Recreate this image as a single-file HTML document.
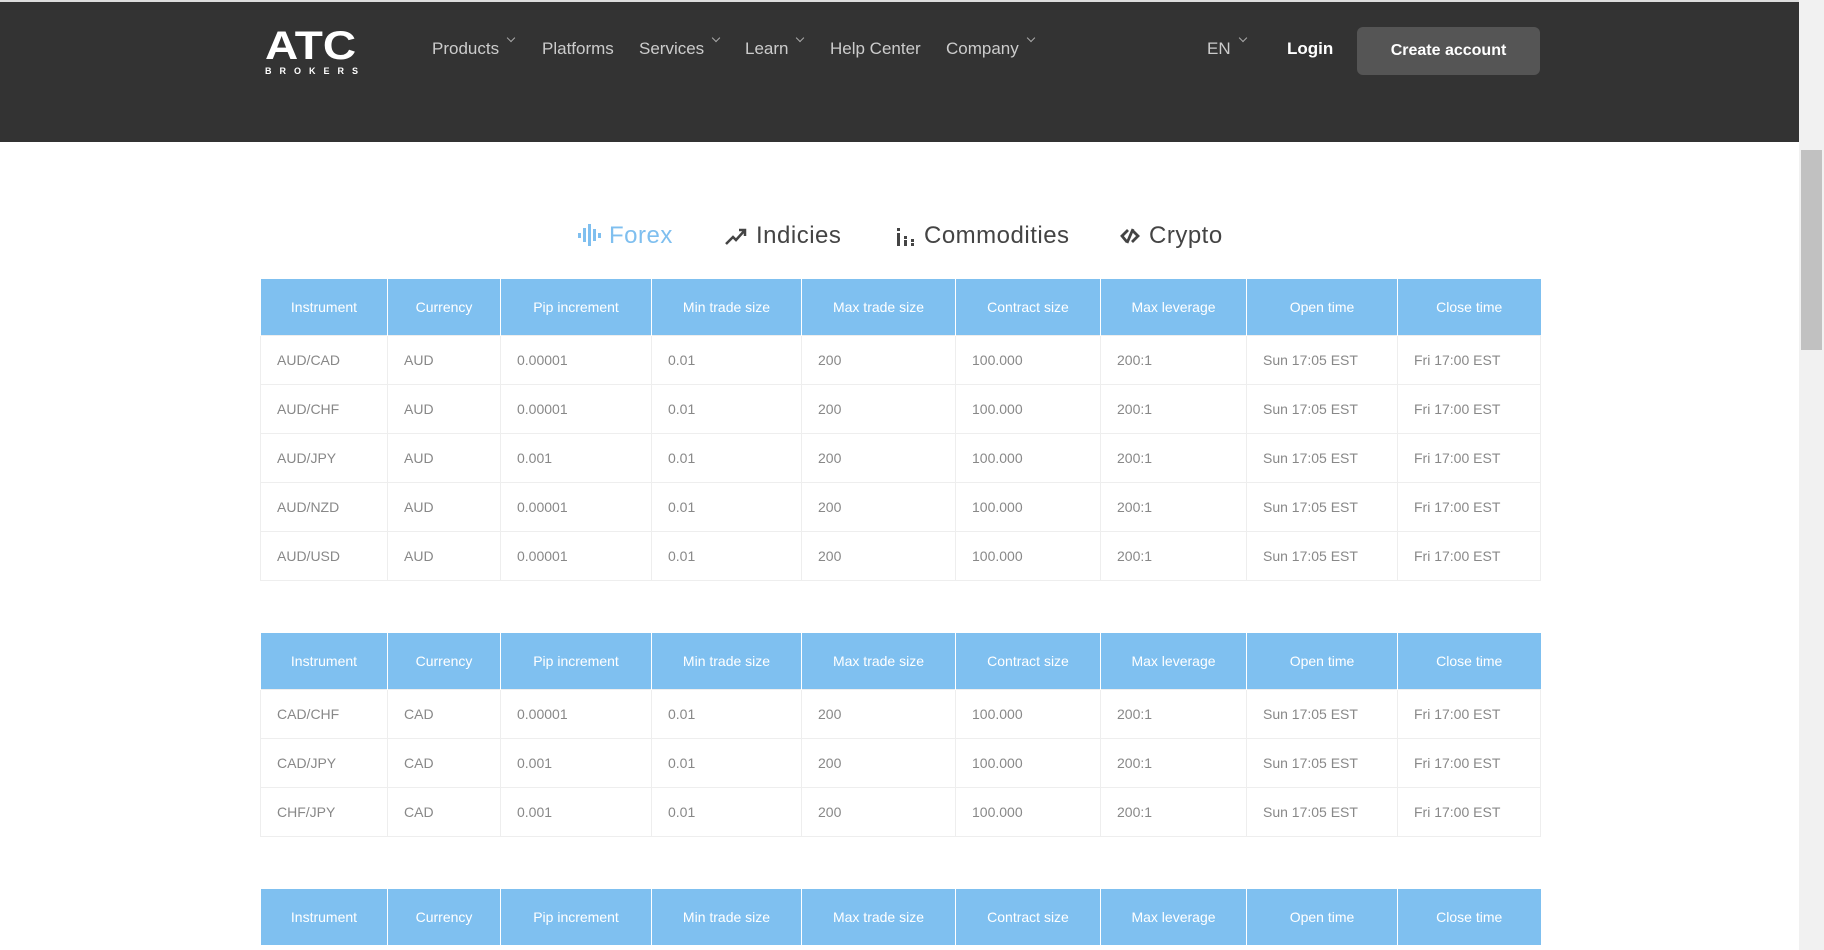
<!DOCTYPE html>
<html><head><meta charset="utf-8"><style>
*{margin:0;padding:0;box-sizing:border-box}
body{width:1824px;height:950px;overflow:hidden;background:#fff;font-family:"Liberation Sans",sans-serif;position:relative}
.hdr{position:absolute;left:0;top:0;width:1799px;height:142px;background:#333;border-top:2px solid #ddd}
.nav{position:absolute;top:37px;font-size:17px;color:#ccc}
.nav span{position:absolute;white-space:nowrap}
.car{display:inline-block;width:6px;height:6px;border-right:1px solid #aaa;border-bottom:1px solid #aaa;transform:rotate(45deg);margin-left:9px;position:relative;top:-4px}
.btn{position:absolute;left:1357px;top:25px;width:183px;height:48px;background:#555;border-radius:6px;color:#fff;font-weight:bold;font-size:16px;text-align:center;line-height:48px}
.sb{position:absolute;right:0;top:0;width:25px;height:950px;background:#f1f1f1}
.thumb{position:absolute;right:2px;top:150px;width:21px;height:200px;background:#c1c1c1}
.tabs{position:absolute;top:222px;font-size:24px;color:#444;letter-spacing:0.5px}
.tabs span{position:absolute;white-space:nowrap}
.tabs svg{vertical-align:-3px;margin-right:8px}
table{position:absolute;left:260px;border-collapse:collapse;table-layout:fixed;width:1280px}
th{background:#7fc0f0;color:#fff;font-weight:normal;font-size:14px;height:56px;border-left:1px solid #fff;text-align:center}
td{height:49px;font-size:14px;color:#888;padding-left:16px;border:1px solid #eee}
</style></head><body>
<div class="hdr">
 <div style="position:absolute;left:265px;top:26px;color:#fff;width:102px">
  <div style="font-size:40px;font-weight:bold;line-height:36px;transform:scaleX(1.15);transform-origin:left">ATC</div>
  <div style="font-size:9px;letter-spacing:8px;margin-top:2px;font-weight:bold">BROKERS</div>
 </div>
 <div class="nav">
  <span style="left:432px">Products<span class="car"></span></span>
  <span style="left:542px">Platforms</span>
  <span style="left:639px">Services<span class="car"></span></span>
  <span style="left:745px">Learn<span class="car"></span></span>
  <span style="left:830px">Help Center</span>
  <span style="left:946px">Company<span class="car"></span></span>
  <span style="left:1207px">EN<span class="car"></span></span>
  <span style="left:1287px;color:#fff;font-weight:bold">Login</span>
 </div>
 <div class="btn">Create account</div>
</div>
<div class="tabs">
 <span style="left:577px;color:#7fbfef"><svg width="24" height="22" viewBox="0 0 24 22"><g fill="#7fbfef"><rect x="1" y="9" width="3" height="5"/><rect x="6" y="4" width="3" height="14"/><rect x="11" y="0" width="3" height="22"/><rect x="16" y="5" width="3" height="12"/><rect x="21" y="9" width="3" height="5"/></g></svg>Forex</span>
 <span style="left:724px"><svg width="24" height="20" viewBox="0 0 24 20"><path d="M2 18 L9 11 L12 14 L21 4 M15 4 H21 V10" stroke="#444" stroke-width="2.5" fill="none"/></svg>Indicies</span>
 <span style="left:896px"><svg width="20" height="20" viewBox="0 0 20 20"><g fill="#444"><rect x="1" y="2" width="3" height="3"/><rect x="1" y="7" width="3" height="13"/><rect x="8" y="10" width="3" height="3"/><rect x="8" y="14" width="3" height="6"/><rect x="15" y="13" width="3" height="3"/><rect x="15" y="17" width="3" height="3"/></g></svg>Commodities</span>
 <span style="left:1119px"><svg width="22" height="20" viewBox="0 0 22 20"><path d="M9 4 L3 10 L8 16 M13 4 L19 10 L13 16 M14 3 L8 17" stroke="#444" stroke-width="2.8" fill="none"/></svg>Crypto</span>
</div>
<table style="top:279px"><colgroup><col style="width:127px"><col style="width:113px"><col style="width:151px"><col style="width:150px"><col style="width:154px"><col style="width:145px"><col style="width:146px"><col style="width:151px"><col style="width:143px"></colgroup>
<tr><th>Instrument</th><th>Currency</th><th>Pip increment</th><th>Min trade size</th><th>Max trade size</th><th>Contract size</th><th>Max leverage</th><th>Open time</th><th>Close time</th></tr>
<tr><td>AUD/CAD</td><td>AUD</td><td>0.00001</td><td>0.01</td><td>200</td><td>100.000</td><td>200:1</td><td>Sun 17:05 EST</td><td>Fri 17:00 EST</td></tr>
<tr><td>AUD/CHF</td><td>AUD</td><td>0.00001</td><td>0.01</td><td>200</td><td>100.000</td><td>200:1</td><td>Sun 17:05 EST</td><td>Fri 17:00 EST</td></tr>
<tr><td>AUD/JPY</td><td>AUD</td><td>0.001</td><td>0.01</td><td>200</td><td>100.000</td><td>200:1</td><td>Sun 17:05 EST</td><td>Fri 17:00 EST</td></tr>
<tr><td>AUD/NZD</td><td>AUD</td><td>0.00001</td><td>0.01</td><td>200</td><td>100.000</td><td>200:1</td><td>Sun 17:05 EST</td><td>Fri 17:00 EST</td></tr>
<tr><td>AUD/USD</td><td>AUD</td><td>0.00001</td><td>0.01</td><td>200</td><td>100.000</td><td>200:1</td><td>Sun 17:05 EST</td><td>Fri 17:00 EST</td></tr>
</table>
<table style="top:633px"><colgroup><col style="width:127px"><col style="width:113px"><col style="width:151px"><col style="width:150px"><col style="width:154px"><col style="width:145px"><col style="width:146px"><col style="width:151px"><col style="width:143px"></colgroup>
<tr><th>Instrument</th><th>Currency</th><th>Pip increment</th><th>Min trade size</th><th>Max trade size</th><th>Contract size</th><th>Max leverage</th><th>Open time</th><th>Close time</th></tr>
<tr><td>CAD/CHF</td><td>CAD</td><td>0.00001</td><td>0.01</td><td>200</td><td>100.000</td><td>200:1</td><td>Sun 17:05 EST</td><td>Fri 17:00 EST</td></tr>
<tr><td>CAD/JPY</td><td>CAD</td><td>0.001</td><td>0.01</td><td>200</td><td>100.000</td><td>200:1</td><td>Sun 17:05 EST</td><td>Fri 17:00 EST</td></tr>
<tr><td>CHF/JPY</td><td>CAD</td><td>0.001</td><td>0.01</td><td>200</td><td>100.000</td><td>200:1</td><td>Sun 17:05 EST</td><td>Fri 17:00 EST</td></tr>
</table>
<table style="top:889px"><colgroup><col style="width:127px"><col style="width:113px"><col style="width:151px"><col style="width:150px"><col style="width:154px"><col style="width:145px"><col style="width:146px"><col style="width:151px"><col style="width:143px"></colgroup>
<tr><th>Instrument</th><th>Currency</th><th>Pip increment</th><th>Min trade size</th><th>Max trade size</th><th>Contract size</th><th>Max leverage</th><th>Open time</th><th>Close time</th></tr>
</table>
<div class="sb"><div class="thumb"></div></div>
</body></html>
